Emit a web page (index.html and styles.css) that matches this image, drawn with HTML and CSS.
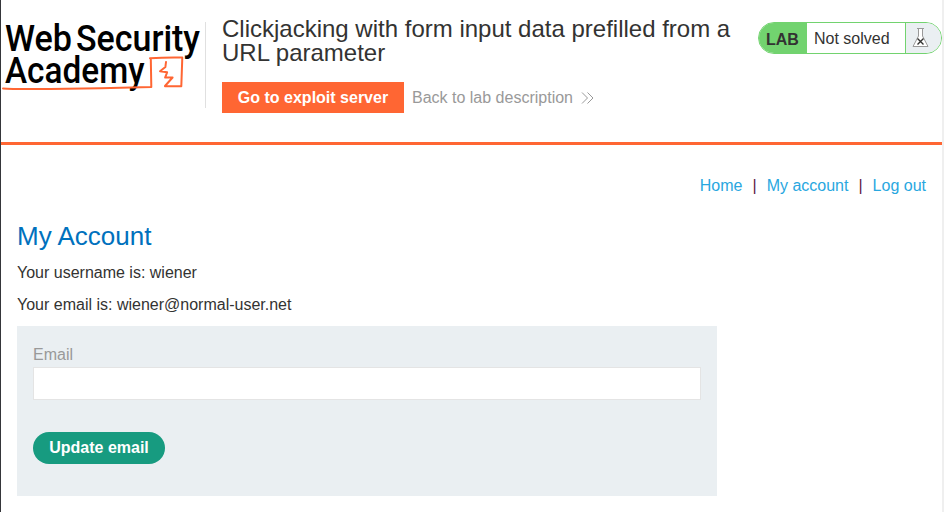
FILE: index.html
```html
<!DOCTYPE html>
<html lang="en">
<head>
<meta charset="utf-8">
<title>Clickjacking with form input data prefilled from a URL parameter</title>
<link rel="stylesheet" href="styles.css">
</head>
<body>
<header class="lab-header">
  <div class="logo">
    <svg width="205" height="86" viewBox="0 22 205 86" role="img" aria-label="Web Security Academy">
      <g class="logo-text">
        <text x="5" y="50.7" textLength="67" lengthAdjust="spacingAndGlyphs">Web</text>
        <text x="76" y="50.7" textLength="124" lengthAdjust="spacingAndGlyphs">Security</text>
        <text x="5" y="83.2" textLength="139.5" lengthAdjust="spacingAndGlyphs">Academy</text>
      </g>
      <g class="logo-mark">
        <path d="M3 88.4Q12 89.4 50 89Q100 88.3 151.3 87L150.8 58.2M150 58.2Q166 57.3 182.3 57.6L181.3 86.3L165 86.2M166 62L165.4 67L160 71.2L167.1 72.3L165.1 77.6L172.6 77.5L165 86"/>
      </g>
    </svg>
  </div>
  <div class="title-box">
    <h2>Clickjacking with form input data prefilled from a URL parameter</h2>
    <div class="actions">
      <a class="exploit">Go to exploit server</a>
      <a class="back">Back to lab description
        <svg width="13" height="12" viewBox="0 0 13 12"><path d="M1 .5L6.5 6L1 11.5M6.5 .5L12 6L6.5 11.5"/></svg>
      </a>
    </div>
  </div>
  <div class="status">
    <span class="lab">LAB</span>
    <span class="state">Not solved</span>
    <span class="flask">
      <svg width="18" height="21" viewBox="0 0 18 21">
        <path class="glass" d="M5 .5H12M6.5 .5V8L1 18.5H16L10.5 8V.5"/>
        <path class="cross" d="M5.5 10.5L11.5 16.5M11.5 10.5L5.5 16.5"/>
      </svg>
    </span>
  </div>
</header>
<main>
  <nav><a>Home</a><span>|</span><a>My account</a><span>|</span><a>Log out</a></nav>
  <h1>My Account</h1>
  <p>Your username is: wiener</p>
  <p>Your email is: wiener@normal-user.net</p>
  <form class="account-form">
    <label for="email">Email</label>
    <input id="email" type="email">
    <button type="button">Update email</button>
  </form>
</main>
</body>
</html>
```
FILE: styles.css
```css
* { box-sizing: border-box; }
body {
  margin: 0;
  height: 512px;
  overflow: hidden;
  border-left: 1px solid #35363a;
  border-right: 2px solid #efefef;
  background: #fff;
  color: #333332;
  font: 16px/20px "Liberation Sans", Arial, sans-serif;
}
.lab-header {
  display: flex;
  align-items: flex-start;
  height: 145px;
  border-bottom: 3px solid #ff6633;
}
.logo {
  width: 205px;
  height: 86px;
  margin-top: 22px;
  margin-right: 16px;
  border-right: 1px solid #e0e0e0;
}
.logo svg { display: block; margin-left: -1px; overflow: visible; }
.logo-text text {
  font: 500 37.5px Roboto, sans-serif;
  fill: #000;
}
.logo-mark path {
  fill: none;
  stroke: #ff6633;
  stroke-width: 2;
  stroke-linejoin: round;
  stroke-linecap: round;
}
.title-box { width: 520px; padding-top: 17px; }
h2 { margin: 0; font-size: 24px; line-height: 24px; font-weight: 400; }
.actions { display: flex; align-items: center; margin-top: 17px; }
.exploit {
  width: 182px;
  height: 31px;
  line-height: 31px;
  text-align: center;
  background: #ff6633;
  color: #fff;
  font-weight: 700;
}
.back { margin-left: 8px; color: #999; }
.back svg { margin-left: 4px; vertical-align: -1px; }
.back path { fill: none; stroke: #999; stroke-width: 1; }
.status {
  display: flex;
  width: 184px;
  height: 32px;
  margin: 22px 0 0 auto;
  border: 1px solid #72d36f;
  border-radius: 16px;
  overflow: hidden;
  line-height: 32px;
}
.lab { width: 48px; padding: 1px 0 0 7px; background: #72d36f; font-weight: 700; }
.state { width: 98px; padding-left: 7px; }
.flask { flex: 1; padding: 5px 0 0 6px; border-left: 1px solid #72d36f; background: #eaeff2; }
.flask svg { display: block; }
.glass { fill: #fff; stroke: #999; }
.cross { fill: none; stroke: #333332; stroke-width: 1.4; }
main { padding: 31px 16px 0; }
nav { display: flex; justify-content: flex-end; }
nav a { color: #29a7df; }
nav span { margin: 0 10px; color: #5c2040; }
h1 { margin: 25px 0 0; font-size: 26px; line-height: 30px; font-weight: 400; color: #0071bd; }
p { margin: 12px 0; line-height: 20px; }
.account-form {
  width: 700px;
  height: 170px;
  margin-top: -1px;
  padding: 19px 16px;
  background: #eaeff2;
}
label { display: block; color: #999; }
input {
  display: block;
  width: 668px;
  height: 33px;
  margin-top: 2px;
  border: 1px solid #e4e4e4;
  background: #fff;
}
button {
  display: block;
  width: 132px;
  height: 32px;
  margin-top: 32px;
  padding: 0;
  border: 0;
  border-radius: 16px;
  background: #179b80;
  color: #fff;
  font: 700 16px/32px "Liberation Sans", Arial, sans-serif;
}
```
